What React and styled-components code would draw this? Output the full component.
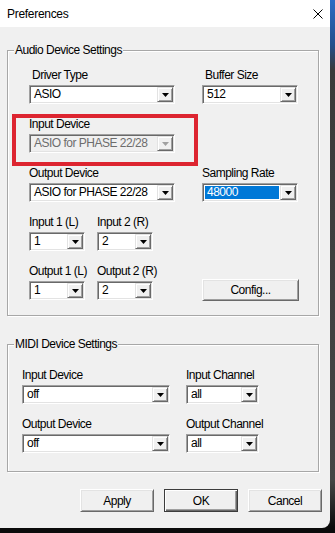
import React from "react";
import styled, { createGlobalStyle } from "styled-components";

const GlobalStyle = createGlobalStyle`
  html, body {
    margin: 0;
    padding: 0;
    background: #0b0b0b;
  }
  body {
    font-family: "Liberation Sans", Arial, sans-serif;
  }
`;

const Desktop = styled.div`
  width: 335px;
  height: 533px;
  background: linear-gradient(to bottom, #2c6cc4 0px, #244f8c 45px, #3a3a3a 70px, #454545 480px, #0b0b0b 528px);
  overflow: hidden;
`;

const Window = styled.div`
  width: 330px;
  height: 528px;
  background: #f0f0f0;
  border-bottom-right-radius: 8px;
  display: flex;
  flex-direction: column;
  box-sizing: border-box;
`;

const TitleBar = styled.div`
  height: 27px;
  flex: none;
  background: #ffffff;
  display: flex;
  align-items: center;
  justify-content: space-between;
  padding: 0 7px;
  font-size: 12px;
  letter-spacing: -0.3px;
  color: #000;
`;

const Content = styled.div`
  padding: 0 11px 0 7px;
  display: flex;
  flex-direction: column;
`;

const Group = styled.fieldset`
  margin: ${(p) => p.$top}px 0 0;
  padding: 0;
  min-width: 0;
  border: 1px solid #a7a7a7;
  box-shadow: inset 1px 1px 0 #ffffff, 1px 1px 0 #ffffff;
`;

const Legend = styled.legend`
  margin-left: 6px;
  padding: 0 1px;
  font-size: 12px;
  line-height: 14px;
  letter-spacing: -0.5px;
  color: #000;
  background: #f0f0f0;
`;

const Grid = styled.div`
  display: grid;
  grid-template-columns: ${(p) => p.$cols};
  column-gap: ${(p) => p.$colGap}px;
  row-gap: 13px;
  align-items: start;
  padding: ${(p) => p.$pad};
`;

const Field = styled.div`
  position: relative;
  display: flex;
  flex-direction: column;
  width: ${(p) => (p.$width ? `${p.$width}px` : "auto")};
`;

const Label = styled.div`
  font-size: 12px;
  line-height: 14px;
  letter-spacing: -0.5px;
  color: #000;
  margin-bottom: 3px;
  padding-left: ${(p) => p.$indent || 0}px;
  white-space: nowrap;
`;

const Combo = styled.div`
  height: 19px;
  box-sizing: border-box;
  display: flex;
  padding: 1px;
  background: ${(p) => (p.$disabled ? "#f0f0f0" : "#ffffff")};
  border: 1px solid;
  border-color: #a0a0a0 #ffffff #ffffff #a0a0a0;
  box-shadow: inset 1px 1px 0 #696969, inset -1px -1px 0 #e3e3e3;
`;

const Value = styled.div`
  flex: 1;
  min-width: 0;
  font-size: 12px;
  line-height: 13px;
  letter-spacing: -0.5px;
  padding-left: 2px;
  margin: 1px;
  color: ${(p) => (p.$disabled ? "#6d6d6d" : p.$selected ? "#ffffff" : "#000")};
  background: ${(p) => (p.$selected ? "#0078d7" : "transparent")};
  white-space: nowrap;
  overflow: hidden;
`;

const DropButton = styled.div`
  width: 16px;
  flex: none;
  box-sizing: border-box;
  background: #f0f0f0;
  border: 1px solid;
  border-color: #e3e3e3 #696969 #696969 #e3e3e3;
  box-shadow: inset 1px 1px 0 #ffffff, inset -1px -1px 0 #a0a0a0;
  display: flex;
  align-items: center;
  justify-content: center;
  color: ${(p) => (p.$disabled ? "#a0a0a0" : "#000")};
`;

const Pair = styled.div`
  display: flex;
  gap: 12px;
`;

const RedMark = styled.div`
  position: absolute;
  left: -17px;
  top: -3px;
  right: -23px;
  bottom: -13px;
  border: 4px solid #dd2530;
  pointer-events: none;
`;

const Button = styled.button`
  width: ${(p) => p.$width}px;
  height: ${(p) => p.$height}px;
  margin: ${(p) => p.$margin || 0};
  padding: 0;
  box-sizing: border-box;
  font-family: "Liberation Sans", Arial, sans-serif;
  font-size: 12px;
  letter-spacing: -0.5px;
  color: #000;
  background: #f0f0f0;
  border: 1px solid;
  border-color: ${(p) => (p.$default ? "#3c3c3c" : "#ffffff #696969 #696969 #ffffff")};
  box-shadow: ${(p) =>
    p.$default
      ? "inset 1px 1px 0 #ffffff, inset -1px -1px 0 #696969, inset -2px -2px 0 #a0a0a0"
      : "inset 1px 1px 0 #e3e3e3, inset -1px -1px 0 #a0a0a0"};
`;

const ButtonRow = styled.div`
  display: flex;
  justify-content: flex-end;
  gap: 10px;
  margin: 17px -3px 0 0;
`;

const Arrow = () => (
  <svg width="7" height="4" viewBox="0 0 7 4">
    <polygon points="0,0 7,0 3.5,4" fill="currentColor" />
  </svg>
);

const CloseIcon = () => (
  <svg width="10" height="10" viewBox="0 0 10 10">
    <path d="M0.5 0.5 L9.5 9.5 M9.5 0.5 L0.5 9.5" stroke="#000" strokeWidth="1" fill="none" />
  </svg>
);

function Select({ value, disabled, selected }) {
  return (
    <Combo $disabled={disabled}>
      <Value $disabled={disabled} $selected={selected}>
        {value}
      </Value>
      <DropButton $disabled={disabled}>
        <Arrow />
      </DropButton>
    </Combo>
  );
}

function LabeledSelect({ label, value, width, indent, disabled, selected, children }) {
  return (
    <Field $width={width}>
      <Label $indent={indent}>{label}</Label>
      <Select value={value} disabled={disabled} selected={selected} />
      {children}
    </Field>
  );
}

export default function App() {
  return (
    <>
      <GlobalStyle />
      <Desktop>
        <Window>
          <TitleBar>
            <span>Preferences</span>
            <CloseIcon />
          </TitleBar>
          <Content>
            <Group $top={16}>
              <Legend>Audio Device Settings</Legend>
              <Grid $cols="146px 96px" $colGap={27} $pad="11px 0 14px 21px">
                <LabeledSelect label="Driver Type" value="ASIO" indent={3} />
                <LabeledSelect label="Buffer Size" value="512" indent={3} />

                <LabeledSelect label="Input Device" value="ASIO for PHASE 22/28" disabled>
                  <RedMark />
                </LabeledSelect>
                <div />

                <LabeledSelect label="Output Device" value="ASIO for PHASE 22/28" />
                <LabeledSelect label="Sampling Rate" value="48000" selected />

                <Pair>
                  <LabeledSelect label="Input 1 (L)" value="1" width={56} />
                  <LabeledSelect label="Input 2 (R)" value="2" width={56} />
                </Pair>
                <div />

                <Pair>
                  <LabeledSelect label="Output 1 (L)" value="1" width={56} />
                  <LabeledSelect label="Output 2 (R)" value="2" width={56} />
                </Pair>
                <Button $width={97} $height={22} $margin="15px 0 0 0">
                  Config...
                </Button>
              </Grid>
            </Group>

            <Group $top={21}>
              <Legend>MIDI Device Settings</Legend>
              <Grid $cols="148px 73px" $colGap={16} $pad="17px 0 18px 14px">
                <LabeledSelect label="Input Device" value="off" />
                <LabeledSelect label="Input Channel" value="all" />
                <LabeledSelect label="Output Device" value="off" />
                <LabeledSelect label="Output Channel" value="all" />
              </Grid>
            </Group>

            <ButtonRow>
              <Button $width={74} $height={23}>Apply</Button>
              <Button $width={74} $height={23} $default>OK</Button>
              <Button $width={74} $height={23}>Cancel</Button>
            </ButtonRow>
          </Content>
        </Window>
      </Desktop>
    </>
  );
}
